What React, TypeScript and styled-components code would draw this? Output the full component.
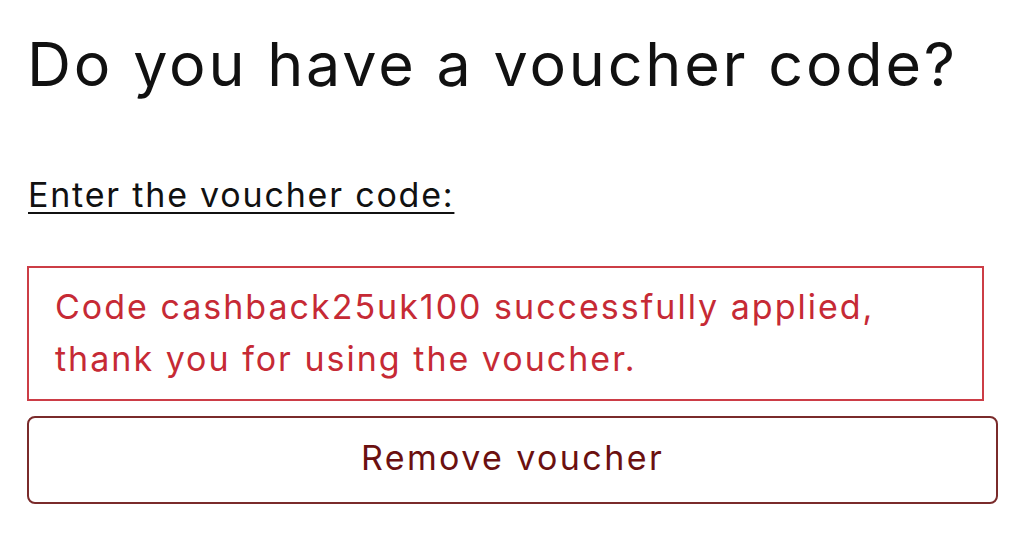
import React from 'react';
import styled, { createGlobalStyle } from 'styled-components';

const GlobalStyle = createGlobalStyle`
  html, body {
    margin: 0;
    padding: 0;
    background: #ffffff;
  }
  body {
    font-family: Inter, "Noto Sans", sans-serif;
    -webkit-font-smoothing: antialiased;
  }
`;

export default function App() {
  return (
    <>
      <GlobalStyle />
      <VoucherSection>
        <Title>Do you have a voucher code?</Title>
        <FieldLabel href="#">Enter the voucher code:</FieldLabel>
        <SuccessNotice>
          Code cashback25uk100 successfully applied,
          <br />
          thank you for using the voucher.
        </SuccessNotice>
        <RemoveButton type="button">Remove voucher</RemoveButton>
      </VoucherSection>
    </>
  );
}

const VoucherSection = styled.section`
  display: flex;
  flex-direction: column;
  align-items: stretch;
  padding: 27px 26px 30px 27px;
`;

const Title = styled.h1`
  margin: 0;
  font-size: 61px;
  font-weight: 400;
  line-height: 74px;
  color: #111111;
  letter-spacing: 2.8px;
`;

const FieldLabel = styled.a`
  align-self: flex-start;
  margin: 72px 0 0 1px;
  font-size: 34px;
  line-height: 44px;
  color: #111111;
  letter-spacing: 1.8px;
  text-decoration: underline;
  text-decoration-thickness: 2px;
  text-underline-offset: 5px;
`;

const SuccessNotice = styled.p`
  margin: 49px 14px 0 0;
  padding: 13px 20px 14px 26px;
  border: 2px solid #cc3d46;
  font-size: 34px;
  line-height: 52px;
  color: #c62a35;
  letter-spacing: 2px;
`;

const RemoveButton = styled.button`
  margin-top: 15px;
  height: 88px;
  padding: 0 0 6px;
  border: 2px solid #7a2b2b;
  border-radius: 8px;
  background: #ffffff;
  font-family: inherit;
  font-size: 34px;
  color: #6b1010;
  letter-spacing: 2.4px;
  cursor: pointer;
`;
